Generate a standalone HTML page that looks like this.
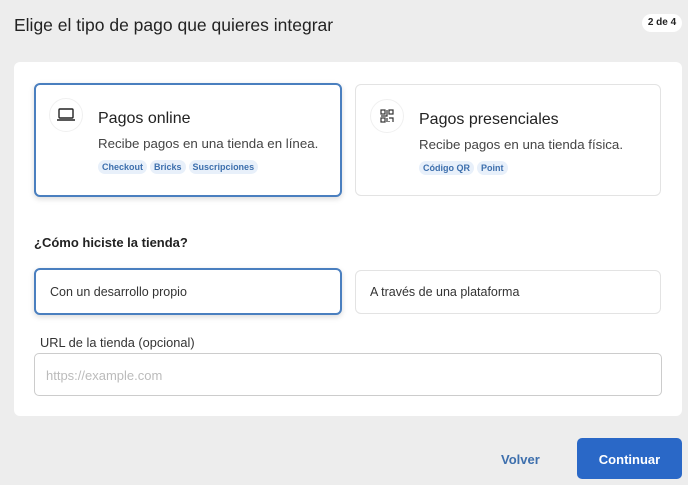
<!DOCTYPE html>
<html><head><meta charset="utf-8"><style>
*{box-sizing:border-box;margin:0;padding:0}
body{width:688px;height:485px;background:#ededed;font-family:"Liberation Sans",sans-serif;color:#222;position:relative;overflow:hidden}
.abs{position:absolute}
.title{left:14px;top:15px;font-size:17.5px;color:#222}
.badge{left:642px;top:14px;width:40px;height:18px;background:#fff;border-radius:9px;font-size:10px;font-weight:bold;text-align:center;line-height:18px}
.panel{left:14px;top:62px;width:668px;height:354px;background:#fff;border-radius:6px}
.card{background:#fff;border:1px solid #e3e3e3;border-radius:6px}
.sel{border:2px solid #4a7fbf;box-shadow:0 2px 6px rgba(0,0,0,.15)}
.ic{width:34px;height:34px;border-radius:50%;border:1px solid #f0f0f0;display:flex;align-items:center;justify-content:center}
.h{font-size:16px;color:#222}
.d{font-size:13.3px;color:#444}
.tag{display:inline-block;background:#e8f0fa;color:#3d6fad;font-size:9px;font-weight:bold;padding:0 4px;height:14px;line-height:14px;border-radius:7px;margin-right:3px}
.opt{font-size:12.5px;color:#333;padding-left:14px;display:flex;align-items:center}
</style></head><body>
<div class="abs title">Elige el tipo de pago que quieres integrar</div>
<div class="abs badge">2 de 4</div>
<div class="abs panel"></div>

<div class="abs card sel" style="left:34px;top:83px;width:308px;height:114px"></div>
<div class="abs ic" style="left:49px;top:98px"><svg width="20" height="14" viewBox="0 0 20 14"><rect x="3" y="1" width="14" height="9" rx="1" fill="none" stroke="#222" stroke-width="1.4"/><path d="M1 12h18" stroke="#222" stroke-width="1.6"/></svg></div>
<div class="abs h" style="left:98px;top:110px">Pagos online</div>
<div class="abs d" style="left:98px;top:136px">Recibe pagos en una tienda en línea.</div>
<div class="abs" style="left:98px;top:157px"><span class="tag">Checkout</span><span class="tag">Bricks</span><span class="tag">Suscripciones</span></div>

<div class="abs card" style="left:355px;top:84px;width:306px;height:112px"></div>
<div class="abs ic" style="left:370px;top:99px"><svg width="14" height="14" viewBox="0 0 14 14" fill="none" stroke="#333" stroke-width="1.2"><rect x="1" y="1" width="4" height="4"/><rect x="9" y="1" width="4" height="4"/><rect x="1" y="9" width="4" height="4"/><path d="M9 9h4v4M9 12v1M7 1v6H1M7 9v4"/></svg></div>
<div class="abs h" style="left:419px;top:111px">Pagos presenciales</div>
<div class="abs d" style="left:419px;top:137px">Recibe pagos en una tienda física.</div>
<div class="abs" style="left:419px;top:158px"><span class="tag">Código QR</span><span class="tag">Point</span></div>

<div class="abs" style="left:34px;top:235px;font-size:13px;font-weight:bold">¿Cómo hiciste la tienda?</div>
<div class="abs card sel opt" style="left:34px;top:268px;width:308px;height:47px">Con un desarrollo propio</div>
<div class="abs card opt" style="left:355px;top:270px;width:306px;height:44px">A través de una plataforma</div>

<div class="abs" style="left:40px;top:335px;font-size:12.8px;color:#333">URL de la tienda (opcional)</div>
<div class="abs" style="left:34px;top:353px;width:628px;height:43px;border:1px solid #ccc;border-radius:5px;font-size:13px;color:#bbb;padding-left:11px;line-height:43px">https://example.com</div>

<div class="abs" style="left:501px;top:452px;font-size:13px;font-weight:bold;color:#3d6fad">Volver</div>
<div class="abs" style="left:577px;top:438px;width:105px;height:41px;background:#2a68c7;border-radius:5px;color:#fff;font-size:13px;font-weight:bold;text-align:center;line-height:43px">Continuar</div>
</body></html>
